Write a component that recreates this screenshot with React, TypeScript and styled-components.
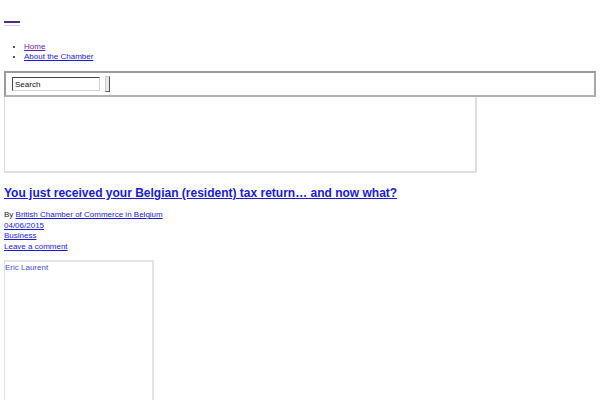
import * as React from "react";
import styled, { createGlobalStyle } from "styled-components";

const GlobalStyle = createGlobalStyle`
  html, body {
    margin: 0;
    padding: 0;
    background: #ffffff;
  }
  body {
    font-family: "Liberation Sans", Arial, sans-serif;
    font-size: 8px;
    color: #222222;
  }
  a {
    color: #1a1ad6;
  }
`;

const Page = styled.div`
  padding: 0 4px;
  width: 592px;
  overflow: hidden;
  height: 400px;
`;

const Header = styled.header`
  padding-top: 21px;
  height: 21px;
`;

const MenuToggle = styled.button`
  display: block;
  width: 16px;
  height: 6px;
  padding: 0;
  border: 0;
  background: transparent;
  cursor: pointer;
`;

const MenuBar = styled.span<{ light?: boolean }>`
  display: block;
  height: ${props => (props.light ? "1px" : "2px")};
  margin-bottom: 2px;
  background: ${props => (props.light ? "#d9cce8" : "#4f2a80")};
`;

const NavList = styled.ul`
  margin: 0;
  padding: 0 0 0 20px;
  list-style: disc;
  line-height: 10px;
`;

const NavItem = styled.li<{ visited?: boolean }>`
  a {
    color: ${props => (props.visited ? "#6a1ea8" : "#1a1ad6")};
  }
`;

const SearchBar = styled.form`
  margin-top: 9px;
  height: 22px;
  border: 2px solid #9a9a9a;
  border-right-color: #a8a8a8;
  border-bottom-color: #b0b0b0;
  display: flex;
  align-items: center;
  padding-left: 6px;
  gap: 5px;
`;

const SearchInput = styled.input`
  width: 82px;
  height: 10px;
  padding: 1px 2px;
  font-family: "Liberation Sans", Arial, sans-serif;
  font-size: 8px;
  color: #111;
  border: 1px solid #d0d0d0;
  border-top-color: #444;
  border-left-color: #444;
  outline: none;
`;

const SearchButton = styled.button`
  width: 5px;
  height: 16px;
  padding: 0;
  background: #e6e6e6;
  border: 1px solid #cfcfcf;
  border-right-color: #555;
  border-bottom-color: #555;
`;

const Thumbnail = styled.div`
  width: 470px;
  height: 74px;
  border: 1px solid #dedede;
  border-top: 0;
  border-width: 0 2px 2px 1px;
`;

const Title = styled.h2`
  margin: 12px 0 0;
  font-size: 12px;
  font-weight: bold;
  line-height: 16px;
  a {
    color: #1a1ad6;
  }
`;

const Meta = styled.div`
  margin-top: 9px;
  line-height: 10.6px;
`;

const MetaLine = styled.div``;

const AuthorBox = styled.div`
  margin-top: 8px;
  width: 147px;
  height: 160px;
  border: 2px solid #e4e4e4;
  border-left-width: 1px;
  padding-top: 1px;
  a {
    color: #4a4ae0;
    text-decoration: none;
  }
`;

export default function App() {
  return (
    <>
      <GlobalStyle />
      <Page>
        <Header>
          <MenuToggle aria-label="Menu">
            <MenuBar />
            <MenuBar light />
          </MenuToggle>
        </Header>
        <NavList>
          <NavItem visited>
            <a href="#">Home</a>
          </NavItem>
          <NavItem>
            <a href="#">About the Chamber</a>
          </NavItem>
        </NavList>
        <SearchBar onSubmit={e => e.preventDefault()}>
          <SearchInput defaultValue="Search" />
          <SearchButton type="submit" />
        </SearchBar>
        <Thumbnail />
        <Title>
          <a href="#">You just received your Belgian (resident) tax return… and now what?</a>
        </Title>
        <Meta>
          <MetaLine>
            By <a href="#">British Chamber of Commerce in Belgium</a>
          </MetaLine>
          <MetaLine>
            <a href="#">04/06/2015</a>
          </MetaLine>
          <MetaLine>
            <a href="#">Business</a>
          </MetaLine>
          <MetaLine>
            <a href="#">Leave a comment</a>
          </MetaLine>
        </Meta>
        <AuthorBox>
          <a href="#">Eric Laurent</a>
        </AuthorBox>
      </Page>
    </>
  );
}
